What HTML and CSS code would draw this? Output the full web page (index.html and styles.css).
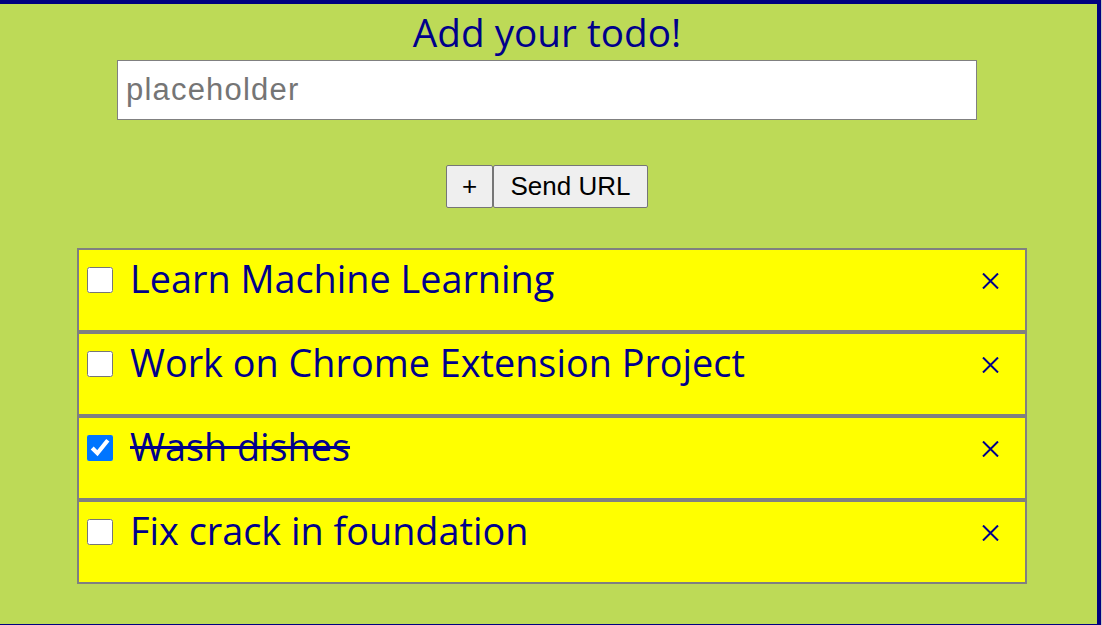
FILE: index.html
```html
<!DOCTYPE html>
<html>
<head>
<meta charset="utf-8">
<link rel="stylesheet" href="styles.css">
</head>
<body>
<div class="frame">
  <h1 class="title">Add your todo!</h1>
  <input class="todo-input" type="text" placeholder="placeholder">
  <div class="actions">
    <button class="btn btn-plus">+</button>
    <button class="btn btn-send">Send URL</button>
  </div>
  <ul class="todo-list">
    <li class="todo-item">
      <input type="checkbox" class="todo-check">
      <span class="todo-text">Learn Machine Learning</span>
      <span class="todo-remove"><svg width="17" height="16" viewBox="0 0 17 16"><path d="M1 0.5 L16 15.5 M16 0.5 L1 15.5" stroke="#00008b" stroke-width="2" fill="none"/></svg></span>
    </li>
    <li class="todo-item">
      <input type="checkbox" class="todo-check">
      <span class="todo-text">Work on Chrome Extension Project</span>
      <span class="todo-remove"><svg width="17" height="16" viewBox="0 0 17 16"><path d="M1 0.5 L16 15.5 M16 0.5 L1 15.5" stroke="#00008b" stroke-width="2" fill="none"/></svg></span>
    </li>
    <li class="todo-item">
      <input type="checkbox" class="todo-check" checked>
      <span class="todo-text done">Wash dishes</span>
      <span class="todo-remove"><svg width="17" height="16" viewBox="0 0 17 16"><path d="M1 0.5 L16 15.5 M16 0.5 L1 15.5" stroke="#00008b" stroke-width="2" fill="none"/></svg></span>
    </li>
    <li class="todo-item">
      <input type="checkbox" class="todo-check">
      <span class="todo-text">Fix crack in foundation</span>
      <span class="todo-remove"><svg width="17" height="16" viewBox="0 0 17 16"><path d="M1 0.5 L16 15.5 M16 0.5 L1 15.5" stroke="#00008b" stroke-width="2" fill="none"/></svg></span>
    </li>
  </ul>
</div>
</body>
</html>
```

FILE: styles.css
```css
html, body {
  margin: 0;
  padding: 0;
  background: #c8c8c8;
}
.frame {
  box-sizing: border-box;
  width: 1101px;
  height: 625px;
  background: #bdda57;
  border-top: 4px solid #000080;
  border-right: 4px solid #000080;
  border-bottom: 1px solid #000080;
  display: flex;
  flex-direction: column;
  align-items: center;
  font-family: "Open Sans", sans-serif;
  color: #00008b;
}
.title {
  margin: 0;
  font-size: 38.7px;
  font-weight: normal;
  line-height: 56px;
  height: 56px;
  margin-right: 3px;
}
.todo-input {
  box-sizing: border-box;
  width: 860px;
  height: 60px;
  margin: 0 3px 0 0;
  padding: 0 8px;
  border: 1px solid #808080;
  border-radius: 0;
  font-family: "Liberation Sans", Arial, sans-serif;
  font-size: 31px;
  letter-spacing: 1.2px;
  outline: none;
}
.todo-input::placeholder {
  color: #757575;
}
.actions {
  display: flex;
  margin-top: 45px;
  margin-right: 3px;
}
.btn {
  box-sizing: border-box;
  height: 43px;
  padding: 0;
  margin: 0;
  font-family: "Liberation Sans", Arial, sans-serif;
  font-size: 26px;
  color: #000;
  background: #efefef;
  border: 1px solid #767676;
  border-radius: 2px;
}
.btn-plus {
  width: 47px;
}
.btn-send {
  width: 155px;
}
.todo-list {
  list-style: none;
  margin: 40px 0 0 77px;
  padding: 0;
  align-self: flex-start;
  width: 950px;
}
.todo-item {
  box-sizing: border-box;
  height: 84px;
  background: #ffff00;
  border: 2px solid #808080;
  display: flex;
  align-items: flex-start;
  padding: 0 0 0 8px;
}
.todo-check {
  width: 26px;
  height: 26px;
  margin: 17px 0 0 0;
}
.todo-text {
  flex: 1;
  margin-left: 17px;
  font-size: 37.8px;
  line-height: 50px;
  margin-top: 4px;
}
.todo-text.done {
  text-decoration: line-through;
}
.todo-remove {
  width: 17px;
  height: 16px;
  margin: 23px 26px 0 0;
  display: flex;
}
```
